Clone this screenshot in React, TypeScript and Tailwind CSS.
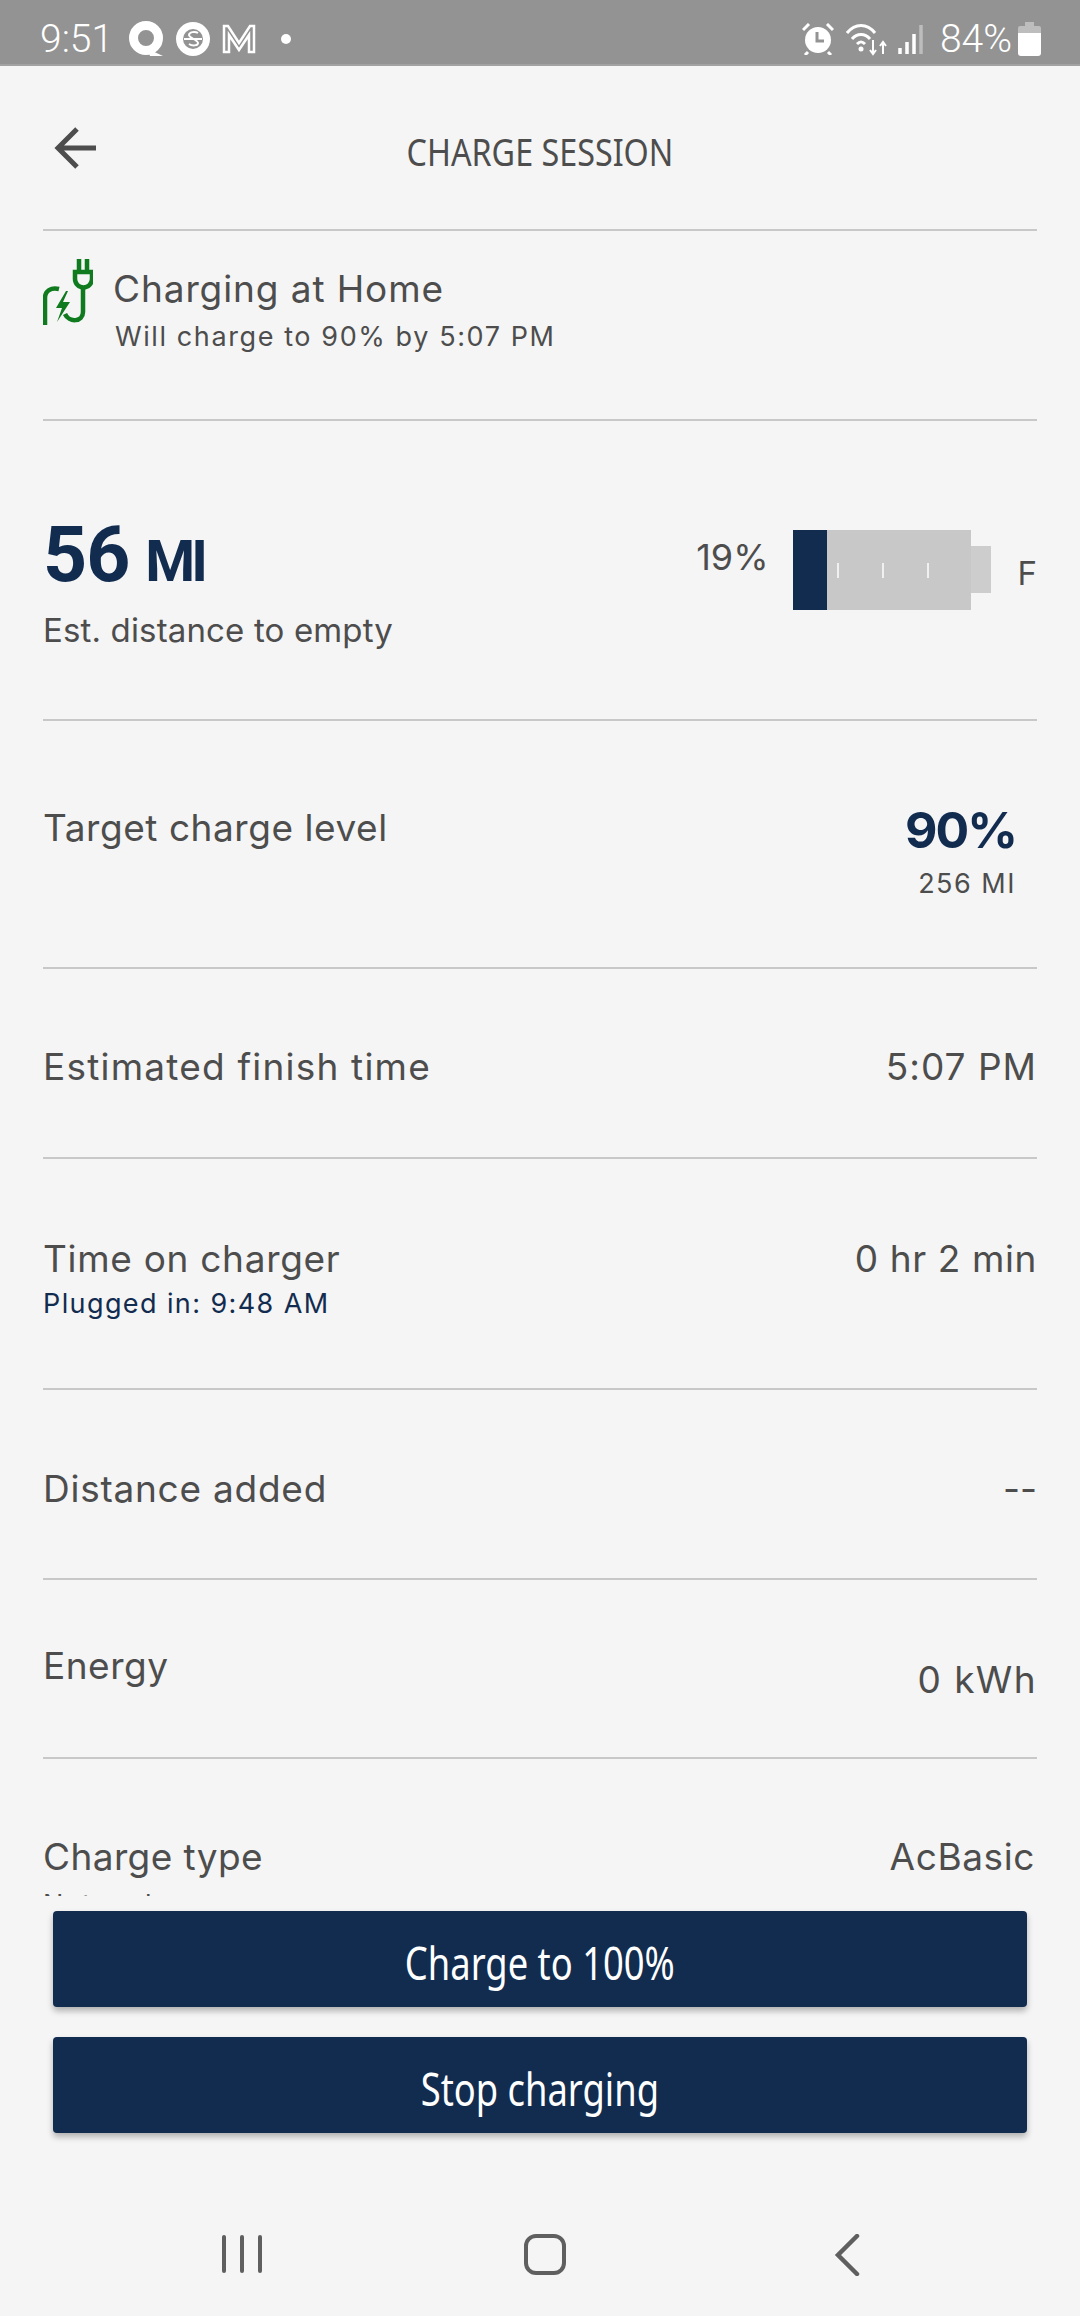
const navy = "text-[#122c50]";

function StatusBar() {
  return (
    <div className="flex h-[66px] shrink-0 items-center justify-between border-b-2 border-[#a2a2a2] bg-[#939393] pl-[40px] pr-[39px] pt-[14px] font-['Roboto',sans-serif] text-[39px] text-white">
      <div className="flex items-center">
        <span className="w-[88px] font-light">9:51</span>
        <svg width="36" height="36" viewBox="0 0 36 36" className="mr-[12px]">
          <circle cx="18" cy="17" r="12.5" fill="none" stroke="#fff" strokeWidth="9" />
          <path d="M20 28 L35 35 L22 35 Z" fill="#fff" />
        </svg>
        <svg width="34" height="34" viewBox="0 0 34 34" className="mr-[12px]">
          <circle cx="17" cy="17" r="17" fill="#fff" />
          <circle cx="17" cy="17" r="10" fill="#939393" />
          <path d="M8 17h18" stroke="#fff" strokeWidth="2" />
          <path d="M22 11c-3-2-9-1-9 2s9 5 9 8-6 3-9 1" fill="none" stroke="#fff" strokeWidth="2" />
        </svg>
        <svg width="34" height="30" viewBox="0 0 34 30" className="mr-[25px]">
          <path d="M2 28V2h4l11 17L28 2h4v26h-5V11l-10 15L7 11v17Z" fill="none" stroke="#fff" strokeWidth="2.5" />
        </svg>
        <span className="h-[10px] w-[10px] rounded-full bg-white" />
      </div>
      <div className="flex items-center">
        <svg width="32" height="32" viewBox="0 0 32 32" className="mr-[12px]">
          <circle cx="16" cy="17" r="13" fill="#fff" />
          <path d="M15 9v9h7" fill="none" stroke="#939393" strokeWidth="3" />
          <path d="M1 7 7 1M31 7l-6-6M6 29l-3 3M26 29l3 3" stroke="#fff" strokeWidth="3" />
        </svg>
        <svg width="43" height="34" viewBox="0 0 43 34" className="mr-[9px]">
          <path d="M1 11C9 1 21 1 29 11M6 17c5-6 13-6 18 0M11 22c3-3 5-3 8 0" fill="none" stroke="#fff" strokeWidth="3" />
          <circle cx="15" cy="27" r="2.5" fill="#fff" />
          <path d="M27 18v14M24 28l3 4 3-4M37 32V20M34 24l3-4 3 4" fill="none" stroke="#fff" strokeWidth="2" />
        </svg>
        <svg width="27" height="30" viewBox="0 0 27 30" className="mr-[15px]">
          <path d="M2 30v-6M9 30V18M16 30V10" stroke="#fff" strokeWidth="3.5" />
          <path d="M23 30V1" stroke="#bdbdbd" strokeWidth="3.5" />
        </svg>
        <span className="mr-[6px] font-light">84%</span>
        <svg width="23" height="34" viewBox="0 0 23 34">
          <path d="M7 0h9v4h5a2 2 0 0 1 2 2v5H0V6a2 2 0 0 1 2-2h5Z" fill="#bdbdbd" />
          <path d="M0 11h23v20a3 3 0 0 1-3 3H3a3 3 0 0 1-3-3Z" fill="#fff" />
        </svg>
      </div>
    </div>
  );
}

function Row({ h, children, last }: { h: string; children: React.ReactNode; last?: boolean }) {
  return <div className={`${h} shrink-0 ${last ? "" : "border-b-2 border-[#c8c8c8]"}`}>{children}</div>;
}

function ActionButton({ label }: { label: string }) {
  return (
    <button className="flex h-[96px] w-full items-center justify-center rounded-[4px] bg-[#122c50] pt-[5px] font-['Noto_Sans',sans-serif] text-white shadow-[0_4px_6px_rgba(0,0,0,0.28)]">
      <span className="block scale-x-[0.79] text-[46px] leading-[60px]">{label}</span>
    </button>
  );
}

export default function App() {
  return (
    <div className="flex h-[2316px] w-[1080px] flex-col overflow-hidden bg-[#f5f5f5] font-['Inter',sans-serif] text-[#4d4d4d]">
      <StatusBar />

      <div className="relative flex h-[163px] shrink-0 items-start justify-center pt-[60px]">
        <svg width="44" height="44" viewBox="0 0 44 44" className="absolute left-[54px] top-[60px]">
          <path d="M42 22H4M23 3 4 22l19 19" fill="none" stroke="#4d4d4d" strokeWidth="5" />
        </svg>
        <h1 className="scale-x-[0.85] font-['Noto_Sans',sans-serif] text-[38px] leading-[50px]">CHARGE SESSION</h1>
      </div>

      <div className="flex h-[1667px] shrink-0 flex-col overflow-hidden px-[43px]">
        <div className="border-t-2 border-[#c8c8c8]" />
        <Row h="h-[190px]">
          <div className="flex pt-[28px]">
            <svg width="50" height="66" viewBox="0 0 50 66" className="mr-[20px]">
              <g fill="none" stroke="#0f7a1e" strokeWidth="4.5">
                <path d="M36 0v13M44 0v13M32 13h17v7a8 8 0 0 1-17 0Z" />
                <path d="M40 28v25c0 10-14 11-18 2" />
                <path d="M2 66V39c0-7 6-11 14-9" />
              </g>
              <path d="M23 32 13 49h6l-5 14 13-20h-7l5-11Z" fill="#0f7a1e" />
            </svg>
            <div className="pt-[5px]">
              <div className="text-[37px] leading-[50px] tracking-[0.9px]">Charging at Home</div>
              <div className="ml-[2px] mt-[5px] text-[27px] leading-[36px] tracking-[1.6px]">Will charge to 90% by 5:07 PM</div>
            </div>
          </div>
        </Row>

        <Row h="h-[300px]">
          <div className="flex justify-between pt-[94px]">
            <div>
              <div className={`flex items-baseline font-['Roboto',sans-serif] font-bold leading-[80px] ${navy}`}>
                <span className="text-[77px] tracking-[-1px]">56</span>
                <span className="ml-[16px] text-[57px] tracking-[-4px]">MI</span>
              </div>
              <div className="mt-[6px] text-[33px] leading-[44px] tracking-[0.15px]">Est. distance to empty</div>
            </div>
            <div className="flex items-start pt-[15px]">
              <span className="mr-[24px] mt-[5px] text-[36px] leading-[44px]">19%</span>
              <div className="flex h-[80px] w-[178px]">
                <div className="w-[34px] bg-[#122c50]" />
                <div className="flex w-[144px] items-center gap-[43px] bg-[#c8c8c8] pl-[10px]">
                  <span className="h-[15px] w-[2px] bg-[#f0f0f0]" />
                  <span className="h-[15px] w-[2px] bg-[#f0f0f0]" />
                  <span className="h-[15px] w-[2px] bg-[#f0f0f0]" />
                </div>
              </div>
              <div className="mt-[16px] h-[47px] w-[20px] bg-[#cdcdcd]" />
              <span className="ml-[27px] mt-[21px] text-[33px] leading-[44px]">F</span>
            </div>
          </div>
        </Row>

        <Row h="h-[248px]">
          <div className="flex justify-between pt-[82px]">
            <span className="text-[37px] leading-[50px] tracking-[0.55px]">Target charge level</span>
            <div className="mr-[21px] flex flex-col items-end">
              <span className={`mt-[2px] text-[50px] font-bold leading-[50px] tracking-[-2px] ${navy}`}>90%</span>
              <span className="mt-[11px] text-[27px] leading-[36px] tracking-[1.5px]">256 MI</span>
            </div>
          </div>
        </Row>

        <Row h="h-[190px]">
          <div className="flex justify-between pt-[73px] text-[37px] leading-[50px]">
            <span className="tracking-[1.2px]">Estimated finish time</span>
            <span className="tracking-[1px]">5:07 PM</span>
          </div>
        </Row>

        <Row h="h-[231px]">
          <div className="flex justify-between pt-[75px] text-[37px] leading-[50px]">
            <div>
              <div className="tracking-[0.7px]">Time on charger</div>
              <div className={`text-[27px] leading-[40px] tracking-[1.4px] ${navy}`}>Plugged in: 9:48 AM</div>
            </div>
            <span className="tracking-[0.6px]">0 hr 2 min</span>
          </div>
        </Row>

        <Row h="h-[190px]">
          <div className="flex justify-between pt-[74px] text-[37px] leading-[50px]">
            <span className="tracking-[0.75px]">Distance added</span>
            <span>--</span>
          </div>
        </Row>

        <Row h="h-[179px]">
          <div className="flex justify-between pt-[61px] text-[37px] leading-[50px]">
            <span className="tracking-[0.5px]">Energy</span>
            <span className="mt-[14px] tracking-[1.4px]">0 kWh</span>
          </div>
        </Row>

        <Row h="h-[200px]" last>
          <div className="flex justify-between pt-[73px] text-[37px] leading-[50px]">
            <div>
              <div className="tracking-[0.4px]">Charge type</div>
              <div className="mt-[3px] text-[27px] leading-[40px] tracking-[1.4px]">Network</div>
            </div>
            <span className="mr-[2px] tracking-[0.6px]">AcBasic</span>
          </div>
        </Row>
      </div>

      <div className="flex shrink-0 flex-col gap-[30px] px-[53px] pt-[15px]">
        <ActionButton label="Charge to 100%" />
        <ActionButton label="Stop charging" />
      </div>

      <div className="flex flex-1 items-start pl-[222px] pt-[102px]">
        <div className="flex h-[38px] w-[40px] justify-between">
          <span className="w-[4px] rounded-full bg-[#5f5f5f]" />
          <span className="w-[4px] rounded-full bg-[#5f5f5f]" />
          <span className="w-[4px] rounded-full bg-[#5f5f5f]" />
        </div>
        <div className="ml-[262px] mt-[-1px] h-[41px] w-[42px] rounded-[12px] border-[4.5px] border-[#5f5f5f]" />
        <svg width="26" height="42" viewBox="0 0 26 42" className="ml-[268px] mt-[-1px]">
          <path d="M23 2 4 21l19 19" fill="none" stroke="#5f5f5f" strokeWidth="4.5" strokeLinecap="round" />
        </svg>
      </div>
    </div>
  );
}
